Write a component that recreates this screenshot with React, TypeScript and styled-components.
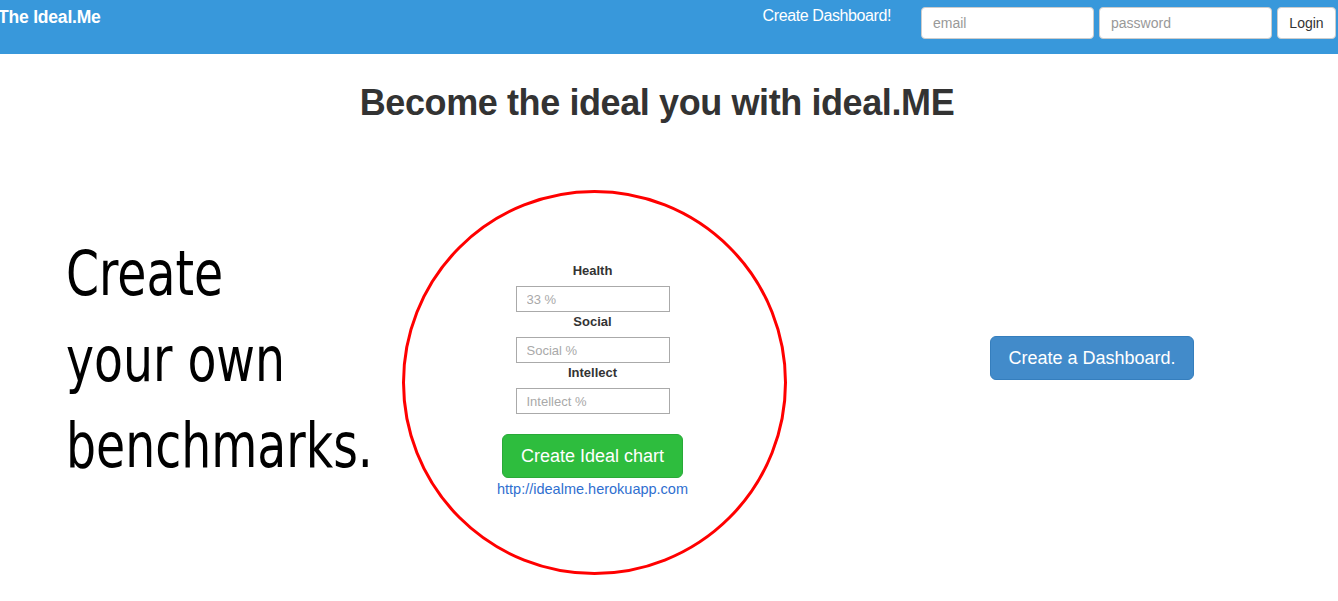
import React from "react";
import styled, { createGlobalStyle } from "styled-components";

const Global = createGlobalStyle`
  html, body { margin: 0; padding: 0; background: #fff; }
  body { font-family: "Liberation Sans", Arial, sans-serif; color: #333; overflow: hidden; }
  * { box-sizing: border-box; }
`;

const NavBar = styled.header`
  height: 54px;
  background: #3898db;
  display: flex;
  align-items: flex-start;
`;

const Brand = styled.a`
  margin-left: -2px;
  margin-top: 7px;
  font-size: 17.5px;
  line-height: 20px;
  font-weight: 700;
  color: #fff;
  text-decoration: none;
  letter-spacing: -0.2px;
  white-space: nowrap;
`;

const Spacer = styled.div`
  flex: 1;
`;

const NavLink = styled.a`
  margin-top: 7px;
  margin-right: 30px;
  font-size: 16px;
  line-height: 18px;
  color: #fff;
  text-decoration: none;
  letter-spacing: -0.4px;
`;

const LoginForm = styled.form`
  display: flex;
  gap: 5px;
  margin-top: 7px;
  margin-right: 2px;
`;

const NavInput = styled.input`
  width: 173px;
  height: 32px;
  border: 1px solid #ccc;
  border-radius: 4px;
  padding: 0 11px;
  font-family: "Liberation Sans", Arial, sans-serif;
  font-size: 14px;
  color: #555;
  background: #fff;
  &::placeholder { color: #999; }
`;

const LoginButton = styled.button`
  width: 59px;
  height: 32px;
  border: 1px solid #ccc;
  border-radius: 4px;
  background: #fff;
  color: #333;
  font-family: "Liberation Sans", Arial, sans-serif;
  font-size: 14px;
  padding: 0;
`;

const Heading = styled.h1`
  margin: 0;
  padding: 31px 24px 0 0;
  text-align: center;
  font-size: 36px;
  line-height: 36px;
  font-weight: 700;
  color: #333;
  letter-spacing: -0.4px;
`;

const MainRow = styled.main`
  display: flex;
  align-items: flex-start;
  padding-left: 66px;
  margin-top: 69px;
`;

const Tagline = styled.div`
  width: 336px;
  flex: none;
  margin-top: 41px;
  font-family: "DejaVu Sans Condensed", "DejaVu Sans", sans-serif;
  font-stretch: condensed;
  font-size: 63px;
  line-height: 86px;
  color: #000;
  white-space: nowrap;
  transform: scaleX(0.835);
  transform-origin: left center;
`;

const Circle = styled.section`
  width: 385px;
  height: 385px;
  flex: none;
  border: 3px solid #ff0000;
  border-radius: 50%;
  display: flex;
  flex-direction: column;
  align-items: center;
  padding: 68px 4px 0 0;
`;

const FieldLabel = styled.label`
  display: block;
  font-size: 13px;
  line-height: 20px;
  font-weight: 700;
  color: #333;
  margin-bottom: 5px;
  text-align: center;
`;

const FieldInput = styled.input`
  width: 154px;
  height: 26px;
  border: 1px solid #aaa;
  border-radius: 0;
  padding: 0 10px;
  font-family: "Liberation Sans", Arial, sans-serif;
  font-size: 13px;
  color: #555;
  margin: 0;
  &::placeholder { color: #a9a9a9; }
`;

const GreenButton = styled.button`
  margin-top: 20px;
  width: 181px;
  height: 44px;
  background: #2ebd3e;
  border: 1px solid #29a938;
  border-radius: 6px;
  color: #fff;
  font-family: "Liberation Sans", Arial, sans-serif;
  font-size: 18px;
  padding: 0;
`;

const SiteLink = styled.a`
  margin-top: 3px;
  font-size: 14.5px;
  line-height: 17px;
  color: #2f6fd0;
  text-decoration: none;
`;

const RightCol = styled.div`
  padding-left: 203px;
  padding-top: 146px;
`;

const BlueButton = styled.button`
  width: 204px;
  height: 44px;
  background: #428bca;
  border: 1px solid #357ebd;
  border-radius: 6px;
  color: #fff;
  font-family: "Liberation Sans", Arial, sans-serif;
  font-size: 18px;
  padding: 0;
`;

export default function App() {
  return (
    <>
      <Global />
      <NavBar>
        <Brand href="#">The Ideal.Me</Brand>
        <Spacer />
        <NavLink href="#">Create Dashboard!</NavLink>
        <LoginForm onSubmit={(e) => e.preventDefault()}>
          <NavInput type="text" placeholder="email" />
          <NavInput type="password" placeholder="password" />
          <LoginButton type="submit">Login</LoginButton>
        </LoginForm>
      </NavBar>
      <Heading>Become the ideal you with ideal.ME</Heading>
      <MainRow>
        <Tagline>
          Create
          <br />
          your own
          <br />
          benchmarks.
        </Tagline>
        <Circle>
          <FieldLabel>Health</FieldLabel>
          <FieldInput placeholder="33 %" />
          <FieldLabel>Social</FieldLabel>
          <FieldInput placeholder="Social %" />
          <FieldLabel>Intellect</FieldLabel>
          <FieldInput placeholder="Intellect %" />
          <GreenButton>Create Ideal chart</GreenButton>
          <SiteLink href="#">http://idealme.herokuapp.com</SiteLink>
        </Circle>
        <RightCol>
          <BlueButton>Create a Dashboard.</BlueButton>
        </RightCol>
      </MainRow>
    </>
  );
}
